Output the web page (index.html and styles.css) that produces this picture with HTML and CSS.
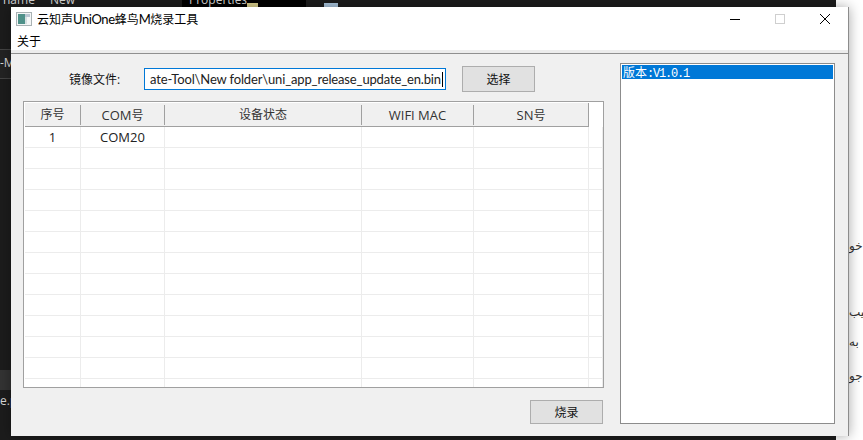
FILE: index.html
```html
<!DOCTYPE html>
<html lang="zh-CN">
<head>
  <meta charset="UTF-8" />
  <meta name="viewport" content="width=device-width, initial-scale=1.0"/>
  <title>云知声UniOne蜂鸟M烧录工具</title>
  <link rel="stylesheet" href="styles.css">
</head>
<body>

  <div class="desktop">
    <!-- what shows behind the tool window -->
    <div class="back-app">
      <span class="back-text tab-name">name</span>
      <span class="back-text tab-new">New</span>
      <span class="tab-black"></span>
      <span class="back-text tab-props">Properties</span>
      <span class="tab-mark"></span>
      <span class="tab-icon"></span>
      <span class="side-row"></span>
      <span class="side-row-low"></span>
      <span class="back-text side-m">-M</span>
      <span class="back-text side-file">e.p</span>
    </div>
    <span class="doc-text doc-1" dir="rtl">خو</span>
    <span class="doc-text doc-2" dir="rtl">تيب</span>
    <span class="doc-text doc-3" dir="rtl">به</span>
    <span class="doc-text doc-4" dir="rtl">جو</span>

    <div class="window">
      <div class="titlebar">
        <svg class="app-icon" width="16" height="14" viewBox="0 0 16 14">
          <rect x="0.5" y="0.5" width="15" height="13" fill="#f4f6f6" stroke="#a9b2b4"/>
          <rect x="2" y="2" width="7" height="10" fill="#4f9189"/>
          <rect x="9" y="2" width="5" height="3" fill="#b9c6d2"/>
          <rect x="9" y="5" width="2" height="7" fill="#d5dfe0"/>
        </svg>
        <span class="title-text">云知声<span class="latin-title">UniOne</span>蜂鸟<span class="latin-title">M</span>烧录工具</span>
        <div class="win-controls">
          <svg width="12" height="12" viewBox="0 0 12 12"><path d="M1 6.5H11" stroke="#000" fill="none"/></svg>
          <svg width="12" height="12" viewBox="0 0 12 12"><rect x="1.5" y="1.5" width="9" height="9" stroke="#cfcfcf" fill="none"/></svg>
          <svg width="12" height="12" viewBox="0 0 12 12"><path d="M1 1L11 11M11 1L1 11" stroke="#000" fill="none"/></svg>
        </div>
      </div>

      <div class="menubar"><span>关于</span></div>

      <div class="main">
        <div class="left-col">
          <div class="file-row">
            <label class="file-label">镜像文件:</label>
            <div class="file-input"><span>ate-Tool\New folder\uni_app_release_update_en.bin</span><i class="caret"></i></div>
            <button class="btn" type="button">选择</button>
          </div>

          <div class="table-box">
            <table class="device-table">
              <colgroup>
                <col class="col-no">
                <col class="col-com">
                <col class="col-state">
                <col class="col-mac">
                <col class="col-sn">
                <col>
              </colgroup>
              <thead>
                <tr>
                  <th><div class="head-cell">序号</div></th>
                  <th><div class="head-cell"><span class="latin">COM</span>号</div></th>
                  <th><div class="head-cell">设备状态</div></th>
                  <th><div class="head-cell"><span class="latin">WIFI MAC</span></div></th>
                  <th class="head-last"><div class="head-cell"><span class="latin">SN</span>号</div></th>
                  <th class="head-rest"></th>
                </tr>
              </thead>
              <tbody>
                <tr><td>1</td><td>COM20</td><td></td><td></td><td></td><td></td></tr>
                <tr><td></td><td></td><td></td><td></td><td></td><td></td></tr>
                <tr><td></td><td></td><td></td><td></td><td></td><td></td></tr>
                <tr><td></td><td></td><td></td><td></td><td></td><td></td></tr>
                <tr><td></td><td></td><td></td><td></td><td></td><td></td></tr>
                <tr><td></td><td></td><td></td><td></td><td></td><td></td></tr>
                <tr><td></td><td></td><td></td><td></td><td></td><td></td></tr>
                <tr><td></td><td></td><td></td><td></td><td></td><td></td></tr>
                <tr><td></td><td></td><td></td><td></td><td></td><td></td></tr>
                <tr><td></td><td></td><td></td><td></td><td></td><td></td></tr>
                <tr><td></td><td></td><td></td><td></td><td></td><td></td></tr>
                <tr><td></td><td></td><td></td><td></td><td></td><td></td></tr>
                <tr><td></td><td></td><td></td><td></td><td></td><td></td></tr>
              </tbody>
            </table>
          </div>

          <div class="burn-row">
            <button class="btn btn-burn" type="button">烧录</button>
          </div>
        </div>

        <div class="version-list">
          <div class="version-item"><span class="version-zh">版本</span>:V1.0.1</div>
        </div>
      </div>
    </div>
  </div>

</body>
</html>
```

FILE: styles.css
```css
* {
  box-sizing: border-box;
  margin: 0;
  padding: 0;
}

body {
  font-family: "Open Sans", "Noto Sans CJK SC", sans-serif;
  font-size: 12px;
  color: #222;
  background-color: #fff;
  overflow: hidden;
}

.latin {
  font-size: 13px;
}

.latin-title {
  font-family: "Lato", sans-serif;
  font-size: 13px;
  letter-spacing: -0.4px;
}

/* desktop behind the window */
.desktop {
  position: relative;
  width: 863px;
  height: 440px;
  overflow: hidden;
}

.back-app {
  position: absolute;
  left: 0;
  top: 0;
  width: 836px;
  height: 440px;
  background-color: #1c1c1c;
}

.back-text {
  position: absolute;
  font-size: 12px;
  line-height: 14px;
  color: #d8d8d8;
}

.tab-name { left: 3px; top: -7px; }
.tab-new { left: 50px; top: -7px; }
.tab-props { left: 189px; top: -7px; }

.tab-mark {
  position: absolute;
  left: 247px;
  top: 3px;
  width: 11px;
  height: 4px;
  background-color: #d9cf8c;
}

.tab-black {
  position: absolute;
  left: 182px;
  top: 0;
  width: 124px;
  height: 7px;
  background-color: #000;
}

.tab-icon {
  position: absolute;
  left: 324px;
  top: 3px;
  width: 14px;
  height: 4px;
  background-color: #a9c4dc;
}

.side-row {
  position: absolute;
  left: 0;
  top: 49px;
  width: 11px;
  height: 30px;
  background-color: #232323;
  border-top: 1px solid #444;
  border-bottom: 1px solid #444;
}

.side-row-low {
  position: absolute;
  left: 0;
  top: 370px;
  width: 11px;
  height: 20px;
  background-color: #333;
}

.side-m { left: 0; top: 56px; }
.side-file { left: 0; top: 394px; }

.doc-text {
  position: absolute;
  left: 849px;
  font-family: "DejaVu Sans", sans-serif;
  font-size: 12px;
  line-height: 14px;
  color: #333;
}

.doc-1 { top: 239px; }
.doc-2 { top: 305px; }
.doc-3 { top: 335px; }
.doc-4 { top: 369px; }

/* tool window, sits on the desktop */
.window {
  position: absolute;
  left: 11px;
  top: 7px;
  width: 838px;
  height: 429px;
  display: flex;
  flex-direction: column;
  background-color: #f0f0f0;
  border-right: 1px solid #8c8c8c;
  box-shadow: 0 0 12px rgba(0, 0, 0, 0.35);
}

.titlebar {
  height: 23px;
  display: flex;
  align-items: center;
  padding-left: 5px;
  background-color: #fff;
  color: #000;
}

.app-icon {
  margin-right: 5px;
}

.win-controls {
  margin-left: auto;
  display: flex;
  gap: 33px;
  padding-right: 17px;
}

.menubar {
  height: 20px;
  display: flex;
  align-items: center;
  padding: 2px 0 0 6px;
  background-color: #fff;
  color: #000;
}

.main {
  flex: 1;
  display: flex;
  gap: 16px;
  padding: 10px 13px 12px 12px;
  background-color: #f0f0f0;
  border-top: 3px solid #ececec;
  box-shadow: inset 0 1px 0 #8f8f8f;
}

.left-col {
  width: 581px;
  display: flex;
  flex-direction: column;
}

.file-row {
  display: flex;
  align-items: center;
  margin-top: 3px;
  padding-left: 46px;
}

.file-label {
  width: 75px;
  color: #111;
}

.file-input {
  width: 302px;
  height: 22px;
  display: flex;
  align-items: center;
  padding-left: 5px;
  background-color: #fff;
  border: 1px solid #0078d7;
  font-family: "Lato", sans-serif;
  font-size: 13px;
  letter-spacing: -0.15px;
  white-space: nowrap;
  overflow: hidden;
}

.caret {
  flex: none;
  width: 1px;
  height: 15px;
  margin-left: 1px;
  background-color: #000;
}

.btn {
  width: 73px;
  height: 26px;
  margin-left: 16px;
  background-color: #e1e1e1;
  border: 1px solid #adadad;
  font-family: inherit;
  font-size: 12px;
  color: #111;
}

.table-box {
  height: 287px;
  margin-top: 9px;
  padding: 1px 0 0 1px;
  background-color: #fff;
  border: 1px solid #a0a0a0;
  overflow: hidden;
}

.device-table {
  width: 100%;
  table-layout: fixed;
  border-collapse: separate;
  border-spacing: 0;
}

.col-no { width: 56px; }
.col-com { width: 84px; }
.col-state { width: 197px; }
.col-mac { width: 112px; }
.col-sn { width: 115px; }

.device-table th {
  height: 24px;
  padding: 2px 0 1px;
  font-weight: 400;
  color: #333;
  background-color: #f0f0f0;
  border-bottom: 1px solid #a0a0a0;
}

.head-cell {
  height: 20px;
  line-height: 20px;
  border-right: 1px solid #a0a0a0;
}

.device-table .head-last {
  border-right: 1px solid #a0a0a0;
}

.head-last .head-cell {
  border-right: 0;
}

.device-table .head-rest {
  background-color: #fff;
  border-bottom: 0;
}

.device-table td {
  height: 21px;
  font-size: 13px;
  text-align: center;
  color: #222;
  border-right: 1px solid #ececec;
  border-bottom: 1px solid #ececec;
}

.burn-row {
  display: flex;
  justify-content: flex-end;
  margin-top: 12px;
  padding-right: 1px;
}

.btn-burn {
  height: 24px;
}

.version-list {
  width: 215px;
  height: 361px;
  padding: 1px;
  background-color: #fff;
  border: 1px solid #8c8c8c;
}

.version-item {
  height: 14px;
  padding-left: 1px;
  background-color: #0078d7;
  color: #fff;
  font-family: "Liberation Mono", "Noto Sans CJK SC", monospace;
  font-size: 12px;
  letter-spacing: -1.2px;
  line-height: 14px;
}

.version-zh {
  font-family: "Noto Sans CJK SC", sans-serif;
  letter-spacing: 0;
}
```
